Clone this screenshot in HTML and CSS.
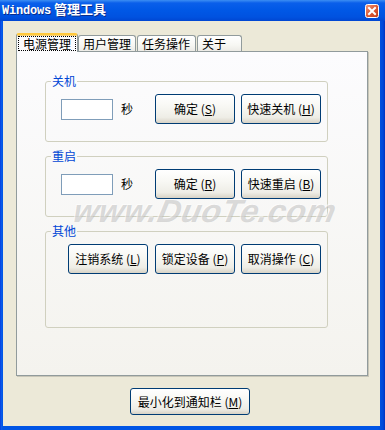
FILE: index.html
```html
<!DOCTYPE html>
<html lang="zh-CN">
<head>
<meta charset="utf-8">
<title>Windows 管理工具</title>
<link rel="stylesheet" href="styles.css">
</head>
<body>
<div class="window">
  <div class="titlebar">
    <span class="title"><span class="title-latin">Windows</span> 管理工具</span>
    <span class="close" aria-label="关闭">
      <svg width="14" height="14" viewBox="0 0 14 14">
        <defs>
          <linearGradient id="cg" x1="0" y1="0" x2="1" y2="1">
            <stop offset="0" stop-color="#F29C7E"/>
            <stop offset="0.5" stop-color="#DE5A35"/>
            <stop offset="1" stop-color="#C13A17"/>
          </linearGradient>
        </defs>
        <rect x="0.5" y="0.5" width="13" height="13" rx="2" fill="url(#cg)" stroke="#FFFFFF"/>
        <path d="M4 4 L10 10 M10 4 L4 10" stroke="#FFFFFF" stroke-width="2" stroke-linecap="square"/>
      </svg>
    </span>
  </div>
  <div class="client">
    <div class="tabs">
      <div class="tab active"><span class="focus">电源管理</span></div>
      <div class="tab t2">用户管理</div>
      <div class="tab t3">任务操作</div>
      <div class="tab t4">关于</div>
    </div>
    <div class="panel">
      <fieldset class="group">
        <legend>关机</legend>
        <div class="row">
          <input class="textbox" type="text">
          <span class="unit">秒</span>
          <button class="btn">确定 (<u>S</u>)</button>
          <button class="btn last">快速关机 (<u>H</u>)</button>
        </div>
      </fieldset>
      <fieldset class="group">
        <legend>重启</legend>
        <div class="row">
          <input class="textbox" type="text">
          <span class="unit">秒</span>
          <button class="btn">确定 (<u>R</u>)</button>
          <button class="btn last">快速重启 (<u>B</u>)</button>
        </div>
      </fieldset>
      <fieldset class="group other">
        <legend>其他</legend>
        <div class="row">
          <button class="btn">注销系统 (<u>L</u>)</button>
          <button class="btn">锁定设备 (<u>P</u>)</button>
          <button class="btn last">取消操作 (<u>C</u>)</button>
        </div>
      </fieldset>
    </div>
    <div class="footer">
      <button class="btn wide">最小化到通知栏 (<u>M</u>)</button>
    </div>
  </div>
  <div class="watermark">www.DuoTe.com</div>
</div>
</body>
</html>
```

FILE: styles.css
```css
* { box-sizing: border-box; }

html, body {
  margin: 0;
  padding: 0;
  background: #FFFFFF;
}

.window {
  position: relative;
  width: 385px;
  height: 430px;
  display: flex;
  flex-direction: column;
  background: linear-gradient(to right, #0831D9 0, #0A5CEB 1px, #0055E5 3px, #0055E5 378px, #0047D8 383px, #0031C0 385px);
  font-family: "Noto Sans CJK SC", "Noto Sans", sans-serif;
  font-size: 12px;
  color: #000000;
  overflow: hidden;
}

.titlebar {
  flex: none;
  height: 21px;
  display: flex;
  align-items: center;
  justify-content: space-between;
  padding: 0 6px 0 2px;
  background: linear-gradient(#3C8EF3 0, #0A5FEA 3px, #0058E6 10px, #0052E0 17px, #0046D2 21px);
}

.title {
  color: #FFFFFF;
  font-weight: bold;
  font-size: 13px;
  line-height: 15px;
  text-shadow: 1px 1px 0 #0A2D8C;
  margin-top: -1px;
}

.title-latin {
  font-family: "Liberation Mono", monospace;
  font-weight: bold;
  font-size: 12px;
  letter-spacing: -0.2px;
}

.close {
  display: flex;
  width: 14px;
  height: 14px;
  margin-top: 1px;
}

.client {
  flex: 1;
  margin: 0 5px 4px 3px;
  background: #ECE9D8;
  padding: 12px 12px 0 13px;
  display: flex;
  flex-direction: column;
}

.tabs {
  display: flex;
  align-items: flex-end;
  height: 18px;
  position: relative;
  z-index: 1;
}

.tab {
  height: 16px;
  border: 1px solid #919B9C;
  border-bottom: none;
  border-radius: 3px 3px 0 0;
  background: linear-gradient(#FFFFFF, #F7F7F3 60%, #ECEBE6);
  line-height: 15px;
  padding: 0 4px;
  white-space: nowrap;
  color: #000000;
}

.tab.active {
  width: 62px;
  height: 19px;
  margin-bottom: -1px;
  padding: 0;
  border-top: 2px solid #FFC83C;
  box-shadow: inset 0 1px 0 #F6D27A;
  background: #FCFCFE;
  border-radius: 3px 3px 0 0;
}

.focus {
  display: block;
  margin: 1px 1px 0 1px;
  height: 15px;
  border: 1px dotted #000000;
  line-height: 13px;
  text-align: center;
}

.t2 { width: 58px; }
.t3 { width: 59px; margin-left: 1px; }
.t4 { width: 45px; margin-left: 1px; }

.panel {
  height: 325px;
  flex: none;
  border: 1px solid #919B9C;
  box-shadow: 1px 1px 0 #C8C6B8;
  background: linear-gradient(#FCFCFE, #F4F3EE);
  padding: 22px 0 0 28px;
}

.group {
  width: 283px;
  margin: 0 0 7px 0;
  padding: 6px 0 17px 15px;
  border: 1px solid #D0D0BF;
  border-radius: 3px;
  min-width: 0;
}

.group legend {
  color: #0046D5;
  font-size: 12px;
  line-height: 14px;
  padding: 0 1px;
  margin-left: -10px;
}

.group.other {
  margin-top: 1px;
  padding: 6px 0 53px 22px;
}

.group.other legend {
  margin-left: -17px;
}

.row {
  display: flex;
  align-items: center;
}

.textbox {
  flex: none;
  width: 52px;
  height: 21px;
  border: 1px solid #7F9DB9;
  background: #FFFFFF;
  margin: 0 8px 0 0;
  padding: 0;
  font: inherit;
}

.unit {
  flex: none;
  width: 12px;
  margin-right: 22px;
  line-height: 14px;
}

.btn {
  flex: none;
  width: 80px;
  height: 30px;
  margin: 0 6px 0 0;
  padding: 0;
  border: 1px solid #003C74;
  border-radius: 3px;
  background: linear-gradient(#FFFFFF 0, #F8F8F4 40%, #EEEDE6 80%, #D8D3C6 100%);
  font-family: "Noto Sans CJK SC", "Noto Sans", sans-serif;
  font-size: 12px;
  color: #000000;
  line-height: 14px;
  white-space: nowrap;
}

.other .btn { margin-right: 7px; }
.other .btn + .btn { margin-right: 6px; }
.btn.last { margin-right: 0; }

.btn u { text-decoration: underline; }

.footer {
  display: flex;
  justify-content: center;
  padding: 12px 4px 0 0;
}

.btn.wide {
  width: 120px;
  height: 27px;
  margin: 0;
}

.watermark {
  position: absolute;
  left: 70px;
  top: 193px;
  font-family: "Liberation Sans", Arial, sans-serif;
  font-weight: bold;
  font-style: italic;
  font-size: 32px;
  letter-spacing: 0.5px;
  color: rgba(175, 175, 175, 0.45);
  text-shadow: -1px -1px 0 rgba(255, 255, 255, 0.6);
  transform: skewX(-12deg);
  transform-origin: left bottom;
  pointer-events: none;
}
```
